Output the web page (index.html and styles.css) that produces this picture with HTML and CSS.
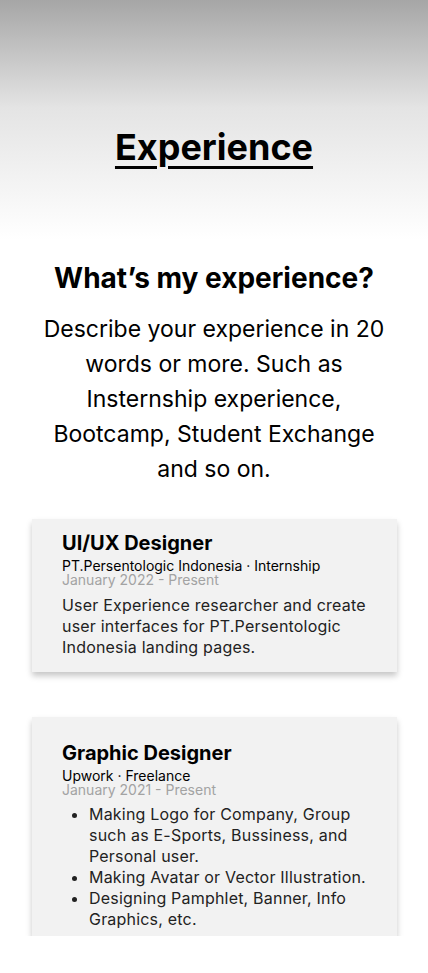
FILE: index.html
```html
<!DOCTYPE html>
<html>
<head>
<meta charset="utf-8">
<link rel="stylesheet" href="styles.css">
</head>
<body>
<header class="hero">
  <h1 class="hero-title">Experience</h1>
</header>
<section class="intro">
  <h2 class="intro-title">What’s my experience?</h2>
  <p class="intro-text">Describe your experience in 20 words or more. Such as Insternship experience, Bootcamp, Student Exchange and so on.</p>
</section>
<section class="cards">
  <article class="card card-first">
    <h3 class="card-title">UI/UX Designer</h3>
    <div class="card-company">PT.Persentologic Indonesia · Internship</div>
    <div class="card-date">January 2022 - Present</div>
    <p class="card-desc">User Experience researcher and create user interfaces for PT.Persentologic Indonesia landing pages.</p>
  </article>
  <article class="card card-second">
    <h3 class="card-title">Graphic Designer</h3>
    <div class="card-company">Upwork · Freelance</div>
    <div class="card-date">January 2021 - Present</div>
    <ul class="card-list">
      <li>Making Logo for Company, Group such as E-Sports, Bussiness, and Personal user.</li>
      <li>Making Avatar or Vector Illustration.</li>
      <li>Designing Pamphlet, Banner, Info Graphics, etc.</li>
    </ul>
  </article>
</section>
</body>
</html>
```

FILE: styles.css
```css
* { box-sizing: border-box; }
html, body { margin: 0; padding: 0; background: #fff; }
body {
  font-family: Inter, "Noto Sans", sans-serif;
  color: #000;
  width: 428px;
}
.hero {
  height: 240px;
  background: linear-gradient(180deg, #a6a6a6 0%, #e4e4e4 45%, #ffffff 100%);
  display: flex;
  justify-content: center;
  padding-top: 124px;
}
.hero-title {
  margin: 0;
  font-size: 36px;
  font-weight: 700;
  line-height: 46px;
  text-decoration: underline;
  text-decoration-thickness: 3px;
  text-underline-offset: 6px;
  height: 46px;
}
.intro {
  display: flex;
  flex-direction: column;
  align-items: center;
  padding-top: 18px;
}
.intro-title {
  margin: 0;
  font-size: 28px;
  font-weight: 700;
  line-height: 40px;
}
.intro-text {
  margin: 14px 0 0;
  width: 360px;
  text-align: center;
  font-size: 23px;
  line-height: 35px;
}
.cards {
  display: flex;
  flex-direction: column;
  gap: 45px;
  padding: 32px 31px 0 32px;
}
.card {
  background: #f2f2f2;
  box-shadow: 0 4px 6px rgba(0, 0, 0, 0.22);
  padding: 10px 20px 14px 30px;
}
.card-second { padding-top: 22px; padding-bottom: 6px; }
.card-title {
  margin: 0;
  font-size: 20px;
  font-weight: 700;
  line-height: 28px;
}
.card-company {
  margin-top: 2px;
  font-size: 14px;
  line-height: 14px;
}
.card-date {
  font-size: 14px;
  line-height: 14px;
  color: #a3a3a3;
}
.card-desc {
  margin: 8px 0 0;
  font-size: 16px;
  line-height: 21px;
  letter-spacing: 0.2px;
  color: #222;
}
.card-list {
  margin: 7px 0 0;
  padding-left: 27px;
  font-size: 16px;
  line-height: 21px;
  letter-spacing: 0.2px;
  color: #222;
}
```
